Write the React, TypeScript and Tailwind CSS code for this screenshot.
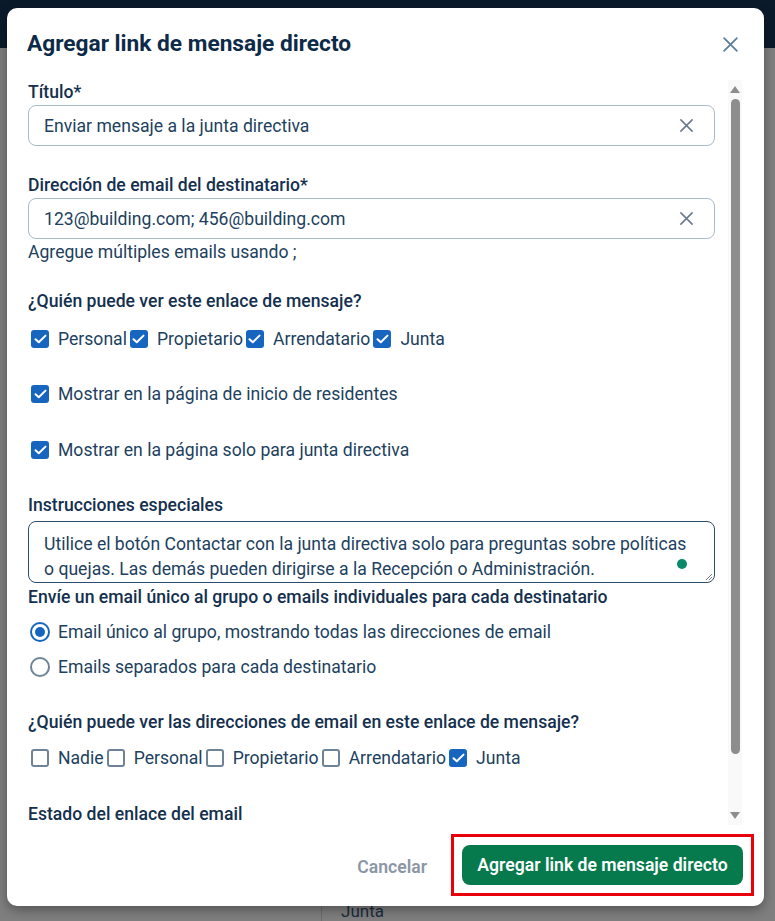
import React from "react";

const label = "text-[17.6px] font-medium leading-6 text-[#14304e]";
const body = "text-[17.6px] leading-6 text-[#213f5e]";

function Check({ on, text }: { on?: boolean; text: string }) {
  return (
    <span className="flex items-center">
      <span className="flex h-6 w-[30px] items-center justify-start pl-[3px]">
        {on ? (
          <span className="flex h-[18px] w-[18px] items-center justify-center rounded-[3px] bg-[#1666c0]">
            <svg width="13" height="10" viewBox="0 0 13 10" fill="none">
              <path d="M1.5 5.2 4.8 8.3 11.5 1.6" stroke="white" strokeWidth="2" strokeLinecap="round" strokeLinejoin="round" />
            </svg>
          </span>
        ) : (
          <span className="h-[18px] w-[18px] rounded-[3px] border-2 border-[#6f8397] bg-white" />
        )}
      </span>
      <span className={body}>{text}</span>
    </span>
  );
}

function Radio({ on, text }: { on?: boolean; text: string }) {
  return (
    <div className="flex items-center">
      <span className="flex h-6 w-[30px] items-center pl-[2px]">
        {on ? (
          <span className="flex h-[20px] w-[20px] items-center justify-center rounded-full border-2 border-[#1666c0]">
            <span className="h-[10px] w-[10px] rounded-full bg-[#1666c0]" />
          </span>
        ) : (
          <span className="h-[20px] w-[20px] rounded-full border-2 border-[#6f8397]" />
        )}
      </span>
      <span className={body}>{text}</span>
    </div>
  );
}

function XIcon({ size, color, width }: { size: number; color: string; width: number }) {
  return (
    <svg width={size} height={size} viewBox="0 0 16 16" fill="none">
      <path d="M2 2 14 14M14 2 2 14" stroke={color} strokeWidth={width} strokeLinecap="round" />
    </svg>
  );
}

function TextInput({ value }: { value: string }) {
  return (
    <div className="flex h-[41px] items-center rounded-[8px] border border-[#a9bacb] bg-white pl-[15px] pr-[20px]">
      <span className={`flex-1 ${body}`}>{value}</span>
      <XIcon size={15} color="#6b7b8b" width={1.7} />
    </div>
  );
}

export default function App() {
  return (
    <div
      className="relative h-[921px] w-[775px] overflow-hidden bg-[#7f7f7f]"
      style={{ fontFamily: "Roboto, 'Liberation Sans', sans-serif" }}
    >
      <div className="h-[48px] bg-[#0b1a2b]" />
      <div className="ml-[321px] mt-[846px] h-[40px] border-l border-[#6c6c6c] pl-[19px] pt-[8px] text-[17px] leading-[18px] text-[#1c2d3e]">
        Junta
      </div>

      {/* modal */}
      <div className="absolute left-[7px] top-[8px] flex h-[898px] w-[757px] flex-col rounded-[10px] bg-white shadow-[0_4px_12px_rgba(0,0,0,0.35)]">
        <div className="flex h-[72px] items-center justify-between pl-[20px] pr-[25px]">
          <h1 className="text-[22.7px] font-bold text-[#0d2a48]">Agregar link de mensaje directo</h1>
          <XIcon size={17} color="#5b7c9a" width={1.6} />
        </div>

        <div className="flex h-[745px] pl-[21px] pr-[22px]">
          <div className="flex-1 pr-[13px]">
            <div className={label}>Título*</div>
            <div className="mt-[1px]">
              <TextInput value="Enviar mensaje a la junta directiva" />
            </div>

            <div className={`mt-[27px] ${label}`}>Dirección de email del destinatario*</div>
            <div className="mt-[1px]">
              <TextInput value="123@building.com; 456@building.com" />
            </div>
            <div className={`mt-px ${body}`}>Agregue múltiples emails usando ;</div>

            <div className={`mt-[25px] ${label}`}>¿Quién puede ver este enlace de mensaje?</div>
            <div className="mt-[14px] flex">
              <Check on text="Personal" />
              <Check on text="Propietario" />
              <Check on text="Arrendatario" />
              <Check on text="Junta" />
            </div>

            <div className="mt-[31px]">
              <Check on text="Mostrar en la página de inicio de residentes" />
            </div>
            <div className="mt-[32px]">
              <Check on text="Mostrar en la página solo para junta directiva" />
            </div>

            <div className={`mt-[31px] ${label}`}>Instrucciones especiales</div>
            <div className="relative mt-[4px] h-[62px] overflow-hidden rounded-[8px] border border-[#2e4d6d] pl-[15px] pt-[10px]">
              <p className="whitespace-nowrap text-[17.6px] leading-[25px] text-[#213f5e]">
                Utilice el botón Contactar con la junta directiva solo para preguntas sobre políticas
                <br />o quejas. Las demás pueden dirigirse a la Recepción o Administración.
              </p>
              <span className="absolute right-[27px] top-[37px] h-[10px] w-[10px] rounded-full bg-[#0a8a6a]" />
              <svg className="absolute bottom-[1px] right-[1px]" width="9" height="9" viewBox="0 0 9 9">
                <path d="M8 2 2 8M8 5 5 8" stroke="#777" strokeWidth="1" />
              </svg>
            </div>

            <div className={`mt-[2px] ${label}`}>
              Envíe un email único al grupo o emails individuales para cada destinatario
            </div>
            <div className="mt-[11px]">
              <Radio on text="Email único al grupo, mostrando todas las direcciones de email" />
            </div>
            <div className="mt-[11px]">
              <Radio text="Emails separados para cada destinatario" />
            </div>

            <div className={`mt-[31px] ${label}`}>
              ¿Quién puede ver las direcciones de email en este enlace de mensaje?
            </div>
            <div className="mt-[12px] flex">
              <Check text="Nadie" />
              <Check text="Personal" />
              <Check text="Propietario" />
              <Check text="Arrendatario" />
              <Check on text="Junta" />
            </div>

            <div className={`mt-[32px] ${label}`}>Estado del enlace del email</div>
          </div>

          {/* scrollbar */}
          <div className="flex w-[14px] flex-col items-center bg-[#f9f9f9]">
            <svg className="mt-[6px]" width="10" height="7" viewBox="0 0 10 7">
              <path d="M5 0 10 7H0Z" fill="#8d8d8d" />
            </svg>
            <div className="mt-[6px] h-[655px] w-[9px] rounded-full bg-[#8d8d8d]" />
            <div className="flex-1" />
            <svg className="mb-[6px]" width="10" height="7" viewBox="0 0 10 7">
              <path d="M0 0H10L5 7Z" fill="#8d8d8d" />
            </svg>
          </div>
        </div>

        <div className="flex flex-1 items-start justify-end pr-[10px] pt-[9px]">
          <span className="mr-[24px] mt-[20px] text-[17.6px] font-semibold text-[#8b97a4]">Cancelar</span>
          <div className="border-[3px] border-[#e8000b] p-[8px]">
            <button className="flex h-[40px] w-[281px] items-center justify-center rounded-[8px] bg-[#067a4c] text-[17.6px] font-semibold text-white">
              Agregar link de mensaje directo
            </button>
          </div>
        </div>
      </div>
    </div>
  );
}
